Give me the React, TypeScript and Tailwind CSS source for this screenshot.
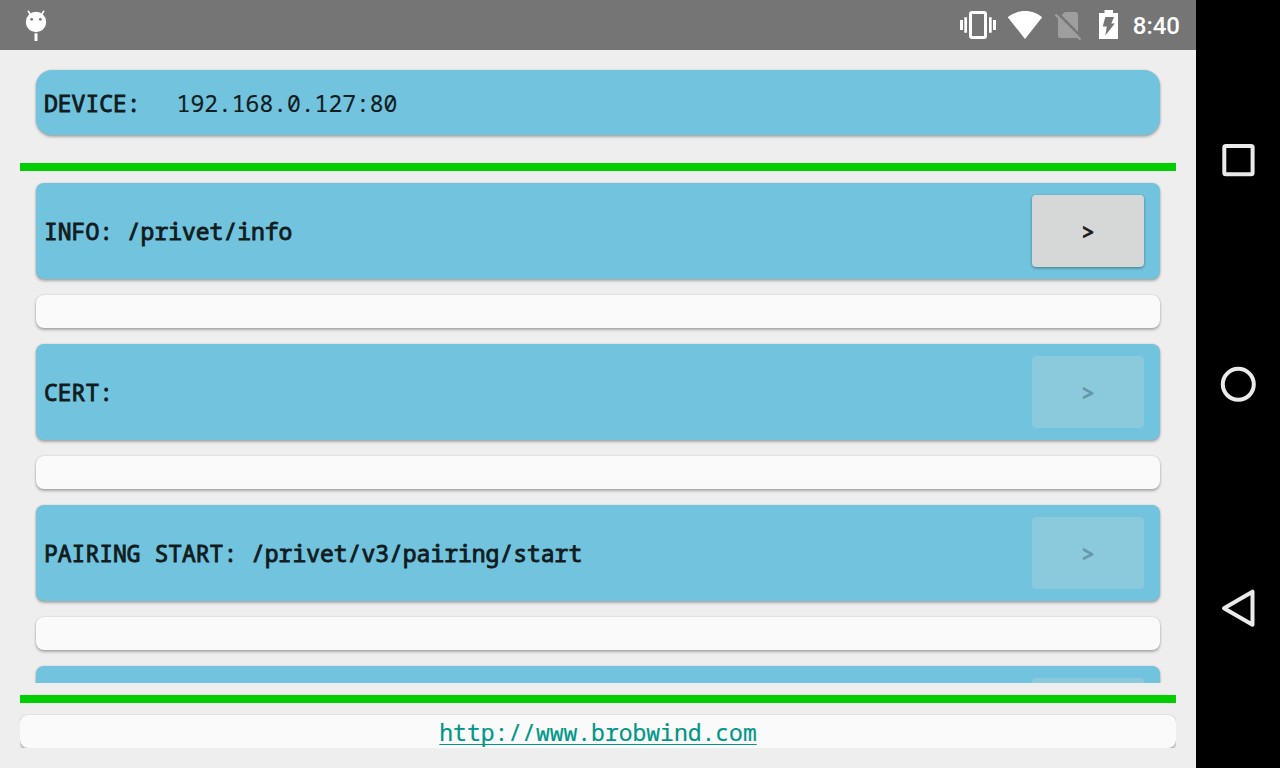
import React from "react";

type Command = { label: string; enabled: boolean };

const commands: Command[] = [
  { label: "INFO: /privet/info", enabled: true },
  { label: "CERT:", enabled: false },
  { label: "PAIRING START: /privet/v3/pairing/start", enabled: false },
];

const cardShadow = "shadow-[0_2px_3px_rgba(0,0,0,0.28),0_0_2px_rgba(0,0,0,0.16)]";
const commandCard = `flex h-24 shrink-0 items-center justify-between rounded-lg bg-[#72c3de] pr-4 pl-2 ${cardShadow}`;

function StatusBar() {
  return (
    <header className="flex h-[50px] shrink-0 items-center bg-[#757575] pr-4 pl-6 text-white">
      <svg className="h-[50px] w-6" viewBox="24 0 24 50" fill="none" aria-label="Debugging">
        <circle cx="36" cy="22" r="10.2" fill="#fff" />
        <path d="M30.5 14.5L28 10.8M41.5 14.5L44 10.8" stroke="#fff" strokeWidth="1.6" />
        <circle cx="31.7" cy="19.3" r="1.4" fill="#757575" />
        <circle cx="40.3" cy="19.3" r="1.4" fill="#757575" />
        <path d="M34.5 33.3h3V41h-3z" fill="#fff" />
      </svg>
      <div className="ml-auto flex items-center gap-3">
        <svg className="h-[50px] w-9" viewBox="960 0 36 50" fill="#fff" aria-label="Vibrate">
          <rect x="970.5" y="12.5" width="15" height="25" rx="1.5" fill="none" stroke="#fff" strokeWidth="3" />
          <path d="M960 20h3v10h-3zM964.3 17.3h2.7v15.4h-2.7zM989 17.3h2.7v15.4h-2.7zM993 20h3v10h-3z" />
        </svg>
        <svg className="h-[50px] w-[35px]" viewBox="1008 0 35 50" fill="#fff" aria-label="Wi-Fi">
          <path d="M1025 39L1007.8 17.2C1012 13.6 1018 11 1025 11s13 2.6 17.2 6.2z" />
        </svg>
        <svg className="h-[50px] w-[27px]" viewBox="1055 0 27 50" aria-label="No SIM">
          <path d="M1065 12H1075.5a2.500 2.500 0 0 1 2.500 2.500V35.500a2.500 2.500 0 0 1-2.500 2.500H1060.500a2.500 2.500 0 0 1-2.500-2.500V18.500z" fill="#9e9e9e" />
          <path d="M1057 12.5L1083 38.5" stroke="#757575" strokeWidth="2.500" />
          <path d="M1055.500 14.500L1080.5 39.5" stroke="#9e9e9e" strokeWidth="2.4" />
        </svg>
        <svg className="ml-[5px] h-[50px] w-5" viewBox="1099 0 20 50" aria-label="Battery charging">
          <path d="M1104.5 10h8.5v3h5v26h-19V13h5.5z" fill="#fff" />
          <path d="M1105.300 17h8.700l-2.700 6.500h3.500L1105.300 35.500l1.500-9h-4z" fill="#757575" />
        </svg>
        <time className="ml-0.5 pt-0.5 font-['Roboto',sans-serif] text-2xl font-medium">8:40</time>
      </div>
    </header>
  );
}

function CommandRow({ label, enabled }: Command) {
  return (
    <>
      <section className={commandCard}>
        <h2 className="[-webkit-text-stroke:0.9px_#101c20]">{label}</h2>
        <button
          type="button"
          disabled={!enabled}
          aria-label={`Run ${label}`}
          className={
            enabled
              ? "h-18 w-28 rounded bg-[#d6d8d7] text-[22px] text-[#202020] shadow-[0_1px_3px_rgba(0,0,0,0.4)] [-webkit-text-stroke:1px_#202020]"
              : "h-18 w-28 rounded bg-[#8bc9dc] text-[22px] text-[#6898a8] [-webkit-text-stroke:1px_#6898a8]"
          }
        >
          &gt;
        </button>
      </section>
      <div className={`h-[33px] shrink-0 rounded-lg bg-[#fafafa] ${cardShadow}`} />
    </>
  );
}

function NavBar() {
  const item = "flex flex-1 items-center justify-center";
  const icon = "h-10 w-10";
  return (
    <nav className="flex w-21 shrink-0 flex-col bg-black py-12">
      <button type="button" aria-label="Recent apps" className={item}>
        <svg className={icon} viewBox="0 0 40 40" fill="none" stroke="#ebebeb" strokeWidth="4">
          <rect x="6.3" y="6" width="28.3" height="28.3" rx="1.5" strokeLinejoin="round" />
        </svg>
      </button>
      <button type="button" aria-label="Home" className={item}>
        <svg className={icon} viewBox="0 0 40 40" fill="none" stroke="#ebebeb" strokeWidth="4">
          <circle cx="20.3" cy="20.3" r="15.5" />
        </svg>
      </button>
      <button type="button" aria-label="Back" className={item}>
        <svg className={icon} viewBox="0 0 40 40" fill="none" stroke="#ebebeb" strokeWidth="4" strokeLinejoin="round">
          <path d="M34.5 3.7V36.7L6 20.3z" />
        </svg>
      </button>
    </nav>
  );
}

export default function App() {
  return (
    <div className="flex h-screen bg-[#eeeeee] font-['Droid_Sans_Mono','Noto_Sans_Mono','DejaVu_Sans_Mono',monospace] text-[23px] leading-8 text-[#101c20]">
      <div className="flex min-w-0 flex-1 flex-col">
        <StatusBar />
        <main className="flex min-h-0 flex-1 flex-col p-5">
          <div className={`mx-4 flex h-[65px] shrink-0 items-center gap-9 rounded-2xl bg-[#72c3de] px-2 ${cardShadow}`}>
            <span className="[-webkit-text-stroke:0.9px_#101c20]">DEVICE:</span>
            <span className="[-webkit-text-stroke:0.2px_#101c20]">192.168.0.127:80</span>
          </div>
          <div className="mt-7 h-2 shrink-0 bg-[#00ce00]" />
          <div className="flex min-h-0 flex-1 flex-col gap-4 overflow-y-auto px-4 pt-3 [scrollbar-width:none]">
            {commands.map((command) => (
              <CommandRow key={command.label} {...command} />
            ))}
            <section className={commandCard}>
              <button type="button" disabled aria-label="Run next command" className="ml-auto h-18 w-28 rounded bg-[#8bc9dc]" />
            </section>
          </div>
          <div className="mt-3 h-2 shrink-0 bg-[#00ce00]" />
          <footer className="mt-[11px] h-[34px] shrink-0 overflow-hidden pt-px">
            <div className={`flex h-full items-center justify-center rounded-lg bg-[#fafafa] ${cardShadow}`}>
              <a
                href="http://www.brobwind.com"
                className="text-[#009688] underline decoration-1 underline-offset-3 [-webkit-text-stroke:0.2px_#009688] [text-decoration-skip-ink:none]"
              >
                http://www.brobwind.com
              </a>
            </div>
          </footer>
        </main>
      </div>
      <NavBar />
    </div>
  );
}
